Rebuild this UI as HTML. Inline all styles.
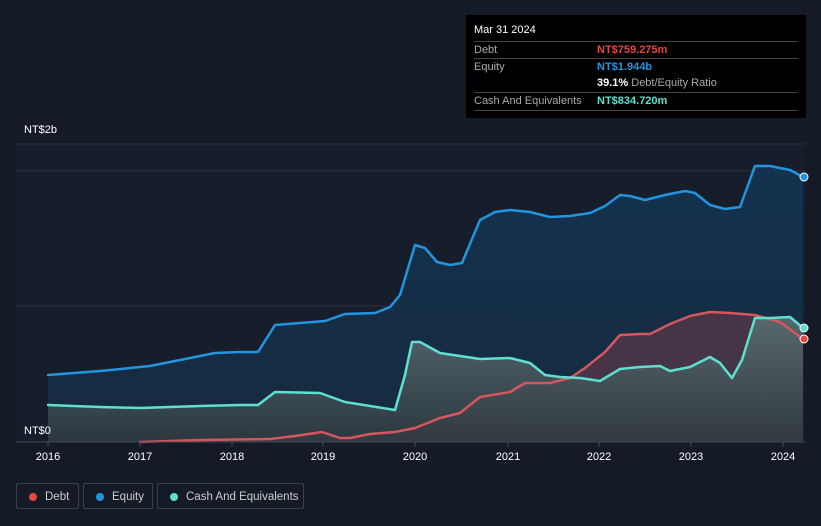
<!DOCTYPE html>
<html><head><meta charset="utf-8"><style>
body{margin:0;background:#151b26;width:821px;height:526px;overflow:hidden;font-family:"Liberation Sans",sans-serif;position:relative}
.tt{position:absolute;left:466px;top:15px;width:340px;height:103px;background:#000;}
.tt .h{position:absolute;left:8px;top:9px;color:#fff;font-size:11px}
.row{position:absolute;left:8px;width:324px;border-top:1px solid #444;height:17px;font-size:11px;color:#aaa}
.row span{position:absolute;left:123px;top:2px;font-weight:bold}
.row i{font-style:normal;position:absolute;left:0;top:2px}
.lab{position:absolute;color:#fff;font-size:11px}
.leg{position:absolute;top:483px;height:26px;border:1px solid #3a404a;border-radius:2px;color:#ccc;font-size:11.5px;line-height:26px;box-sizing:border-box}
.leg b{position:absolute;left:12px;top:9px;width:8px;height:8px;border-radius:50%}
.leg span{position:absolute;left:28px}
</style></head><body>
<svg width="821" height="526" style="position:absolute;left:0;top:0">
<defs>
<linearGradient id="eq" x1="0" y1="0" x2="0" y2="1"><stop offset="0" stop-color="#13324f"/><stop offset="1" stop-color="#162a3e"/></linearGradient>
<linearGradient id="ca" x1="0" y1="0" x2="0" y2="1"><stop offset="0" stop-color="#5a6e70"/><stop offset="1" stop-color="#2e3940"/></linearGradient>
</defs>
<rect x="16" y="144" width="789" height="298" fill="#161e2b"/>
<line x1="16" y1="144" x2="805" y2="144" stroke="#2a3140"/>
<line x1="16" y1="171" x2="805" y2="171" stroke="#2a3140"/>
<line x1="16" y1="306" x2="805" y2="306" stroke="#2a3140"/>
<path d="M48,375 L100,371 L150,366 L190,358 L215,353 L240,352 L258,352 L275,325 L300,323 L325,321 L345,314 L375,313 L390,307 L400,295 L415,245 L425,248 L437,262 L450,265 L462,263 L480,220 L495,212 L510,210 L530,212 L550,217 L570,216 L590,213 L605,206 L620,195 L630,196 L645,200 L665,195 L685,191 L695,193 L710,205 L725,209 L740,207 L755,166 L770,166 L790,170 L803,177 L803,442 L48,442Z" fill="url(#eq)"/>
<path d="M140,442 L200,440 L270,439 L295,436 L322,432 L340,438 L350,438 L370,434 L395,432 L415,428 L440,418 L460,413 L480,397 L510,392 L525,383 L550,383 L570,378 L585,368 L605,352 L620,335 L640,334 L650,334 L670,324 L690,316 L710,312 L730,313 L755,315 L780,322 L803,339 L803,442Z" fill="#463447"/>
<path d="M48,405 L100,407 L140,408 L200,406 L240,405 L258,405 L275,392 L320,393 L345,402 L370,406 L395,410 L405,375 L412,342 L420,342 L440,353 L460,356 L480,359 L510,358 L530,363 L545,375 L560,377 L580,378 L600,381 L620,369 L640,367 L660,366 L670,371 L690,367 L710,357 L720,363 L732,378 L742,360 L755,318 L770,318 L790,317 L803,328 L803,442 L48,442Z" fill="url(#ca)" opacity="0.9"/>
<g fill="none" stroke-width="2.5" stroke-linejoin="round" stroke-linecap="round">
<polyline stroke="#2394df" points="48,375 100,371 150,366 190,358 215,353 240,352 258,352 275,325 300,323 325,321 345,314 375,313 390,307 400,295 415,245 425,248 437,262 450,265 462,263 480,220 495,212 510,210 530,212 550,217 570,216 590,213 605,206 620,195 630,196 645,200 665,195 685,191 695,193 710,205 725,209 740,207 755,166 770,166 790,170 803,177"/>
<polyline stroke="#d5565f" points="140,442 200,440 270,439 295,436 322,432 340,438 350,438 370,434 395,432 415,428 440,418 460,413 480,397 510,392 525,383 550,383 570,378 585,368 605,352 620,335 640,334 650,334 670,324 690,316 710,312 730,313 755,315 780,322 803,339"/>
<polyline stroke="#5ee0cf" points="48,405 100,407 140,408 200,406 240,405 258,405 275,392 320,393 345,402 370,406 395,410 405,375 412,342 420,342 440,353 460,356 480,359 510,358 530,363 545,375 560,377 580,378 600,381 620,369 640,367 660,366 670,371 690,367 710,357 720,363 732,378 742,360 755,318 770,318 790,317 803,328"/>
</g>
<line x1="16" y1="442" x2="805" y2="442" stroke="#444b56"/>
<g stroke="#444b56"><line x1="48" y1="442" x2="48" y2="447"/><line x1="140" y1="442" x2="140" y2="447"/><line x1="232" y1="442" x2="232" y2="447"/><line x1="323" y1="442" x2="323" y2="447"/><line x1="415" y1="442" x2="415" y2="447"/><line x1="508" y1="442" x2="508" y2="447"/><line x1="599" y1="442" x2="599" y2="447"/><line x1="691" y1="442" x2="691" y2="447"/><line x1="783" y1="442" x2="783" y2="447"/></g>
<circle cx="804" cy="177" r="4" fill="#2394df" stroke="#fff" stroke-width="1"/>
<circle cx="804" cy="328" r="4" fill="#5ee0cf" stroke="#fff" stroke-width="1"/>
<circle cx="804" cy="339" r="4" fill="#e64545" stroke="#fff" stroke-width="1"/>
<g fill="#fff" font-size="11" text-anchor="middle" font-family="Liberation Sans">
<text x="48" y="460">2016</text><text x="140" y="460">2017</text><text x="232" y="460">2018</text><text x="323" y="460">2019</text><text x="415" y="460">2020</text><text x="508" y="460">2021</text><text x="599" y="460">2022</text><text x="691" y="460">2023</text><text x="783" y="460">2024</text>
</g>
</svg>
<div class="lab" style="left:24px;top:124px">NT$2b</div>
<div class="lab" style="left:24px;top:425px">NT$0</div>
<div class="tt">
<div class="h">Mar 31 2024</div>
<div class="row" style="top:26px"><i>Debt</i><span style="color:#e64545">NT$759.275m</span></div>
<div class="row" style="top:43px"><i>Equity</i><span style="color:#2394df">NT$1.944b</span></div>
<div class="row" style="top:60px;border-top:none"><span style="color:#fff">39.1% <b style="color:#aaa;font-weight:normal">Debt/Equity Ratio</b></span></div>
<div class="row" style="top:77px;border-bottom:1px solid #444"><i>Cash And Equivalents</i><span style="color:#5ee0cf">NT$834.720m</span></div>
</div>
<div class="leg" style="left:16px;width:63px"><b style="background:#e64545"></b><span>Debt</span></div>
<div class="leg" style="left:83px;width:70px"><b style="background:#2394df"></b><span>Equity</span></div>
<div class="leg" style="left:157px;width:147px"><b style="background:#5ee0cf"></b><span>Cash And Equivalents</span></div>
</body></html>
